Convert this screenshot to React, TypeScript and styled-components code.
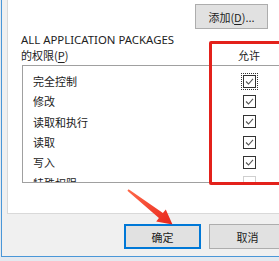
import React from 'react'
import styled, { createGlobalStyle } from 'styled-components'

const GlobalStyle = createGlobalStyle`
  html, body {
    margin: 0;
    padding: 0;
    background: #e9edf2;
  }
  body {
    font-family: "Noto Sans CJK SC", "Noto Sans", sans-serif;
    font-size: 11px;
    color: #1a1a1a;
  }
`

const rows = [
  { label: '完全控制', checked: true, focused: true },
  { label: '修改', checked: true },
  { label: '读取和执行', checked: true },
  { label: '读取', checked: true },
  { label: '写入', checked: true },
  { label: '特殊权限', checked: false, disabled: true },
]

const CheckBox: React.FC<{ checked: boolean; disabled?: boolean }> = ({ checked, disabled }) => (
  <S.Box $disabled={disabled}>
    {checked && (
      <svg width="11" height="11" viewBox="0 0 11 11">
        <polyline points="2,5.5 4.5,8 9,2.8" fill="none" stroke="#555" strokeWidth="1.1" />
      </svg>
    )}
  </S.Box>
)

export default function App() {
  return (
    <S.Screen>
      <GlobalStyle />
      <S.Window>
        <S.Panel>
          <S.AddButton>
            添加(<u>D</u>)...
          </S.AddButton>
          <S.Caption>ALL APPLICATION PACKAGES</S.Caption>
          <S.HeaderRow>
            <S.HeaderLabel>
              的权限(<u>P</u>)
            </S.HeaderLabel>
            <S.HeaderCol>允许</S.HeaderCol>
          </S.HeaderRow>
          <S.ListBox>
            {rows.map((r) => (
              <S.Row key={r.label}>
                <S.RowLabel>{r.label}</S.RowLabel>
                <S.CheckCell>
                  {r.focused ? (
                    <S.Focus>
                      <CheckBox checked={r.checked} />
                    </S.Focus>
                  ) : (
                    <CheckBox checked={r.checked} disabled={r.disabled} />
                  )}
                </S.CheckCell>
              </S.Row>
            ))}
          </S.ListBox>
        </S.Panel>
        <S.Footer>
          <S.Button $primary>确定</S.Button>
          <S.Button>取消</S.Button>
        </S.Footer>
      </S.Window>
      <S.Highlight />
      <S.Arrow width="279" height="261" viewBox="0 0 279 261">
        <defs>
          <linearGradient id="arrowFill" x1="0" y1="0" x2="1" y2="1">
            <stop offset="0" stopColor="#ff6a4a" />
            <stop offset="1" stopColor="#e8261c" />
          </linearGradient>
        </defs>
        <polygon
          points="127.4,190.8 158.9,218.1 156.2,221.6 172.5,224.5 165.8,209.4 162.9,213.1 128.6,189.2"
          fill="url(#arrowFill)"
        />
      </S.Arrow>
    </S.Screen>
  )
}

const S = {
  Screen: styled.div`
    position: relative;
    width: 279px;
    height: 261px;
    overflow: hidden;
    padding-left: 1px;
    box-sizing: border-box;
    background: #e4e9ef;
  `,
  Window: styled.div`
    width: 320px;
    height: 256px;
    border-left: 1px solid #4a97d8;
    border-bottom: 1px solid #4a97d8;
    background: #f0f0f0;
    padding-left: 5px;
  `,
  Panel: styled.div`
    width: 320px;
    height: 214px;
    box-sizing: border-box;
    background: #fff;
    border-left: 1px solid #d9d9d9;
    border-bottom: 1px solid #d9d9d9;
    padding-top: 4px;
  `,
  AddButton: styled.div`
    margin-left: 187px;
    width: 73px;
    height: 25px;
    box-sizing: border-box;
    border: 1px solid #adadad;
    background: #e1e1e1;
    display: flex;
    align-items: center;
    justify-content: center;
    font-size: 11px;
    color: #222;

    u {
      text-underline-offset: 2px;
    }
  `,
  Caption: styled.div`
    margin-top: 3px;
    margin-left: 13px;
    font-family: "Noto Sans", sans-serif;
    font-size: 11.4px;
    line-height: 15px;
    color: #222;
  `,
  HeaderRow: styled.div`
    display: flex;
    align-items: center;
    height: 15px;
    margin-left: 13px;
  `,
  HeaderLabel: styled.div`
    width: 205px;
    font-size: 11px;
    color: #222;

    u {
      text-underline-offset: 2px;
    }
  `,
  HeaderCol: styled.div`
    width: 46px;
    text-align: center;
    font-size: 11px;
    color: #222;
  `,
  ListBox: styled.div`
    margin-top: 3px;
    margin-left: 14px;
    width: 300px;
    height: 118px;
    box-sizing: border-box;
    border: 1px solid #a0a0a0;
    padding-top: 5px;
    overflow: hidden;
  `,
  Row: styled.div`
    display: grid;
    grid-template-columns: 203px 46px;
    align-items: center;
    height: 20.3px;
  `,
  RowLabel: styled.div`
    padding-left: 10px;
    font-size: 11px;
    color: #1a1a1a;
  `,
  CheckCell: styled.div`
    display: flex;
    justify-content: center;
  `,
  Focus: styled.div`
    padding: 1px;
    outline: 1px dotted #333;
    display: flex;
  `,
  Box: styled.div<{ $disabled?: boolean }>`
    width: 13px;
    height: 13px;
    box-sizing: border-box;
    border: 1px solid ${(p) => (p.$disabled ? '#cfcfcf' : '#333')};
    background: #fff;
    display: flex;
    align-items: center;
    justify-content: center;
  `,
  Footer: styled.div`
    display: flex;
    gap: 8px;
    padding-top: 10px;
    padding-left: 117px;
  `,
  Button: styled.div<{ $primary?: boolean }>`
    width: 77px;
    height: 25px;
    box-sizing: border-box;
    border: ${(p) => (p.$primary ? '2px solid #0078d7' : '1px solid #adadad')};
    background: #e1e1e1;
    display: flex;
    align-items: center;
    justify-content: center;
    font-size: 11px;
    color: #222;
  `,
  Highlight: styled.div`
    position: absolute;
    left: 209px;
    top: 41px;
    width: 80px;
    height: 144px;
    box-sizing: border-box;
    border: 3px solid #e3211b;
    border-radius: 2px;
  `,
  Arrow: styled.svg`
    position: absolute;
    left: 0;
    top: 0;
  `,
}
